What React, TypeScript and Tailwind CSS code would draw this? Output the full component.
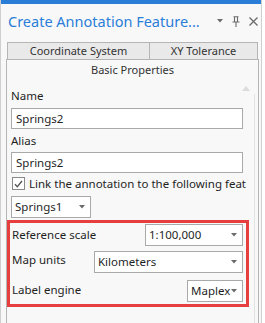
import React from "react";

const font = { fontFamily: '"Noto Sans", "Open Sans", sans-serif' };

const Caret: React.FC = () => (
    <svg width="6" height="4" viewBox="0 0 6 4" className="shrink-0">
        <path d="M0 0h6L3 3.5z" fill="#6b6b6b" />
    </svg>
);

const Select: React.FC<{ value: string; className: string }> = ({ value, className }) => (
    <div
        className={`h-[22px] shrink-0 border border-[#a9a9a9] bg-white flex items-center justify-between pl-[3px] pr-[5px] text-[11.5px] text-[#1f1f1f] ${className}`}
    >
        <span>{value}</span>
        <Caret />
    </div>
);

const Input: React.FC<{ value: string }> = ({ value }) => (
    <div className="h-[21px] w-[232px] border border-[#a9a9a9] bg-white flex items-center pl-[4px] text-[11.5px] text-[#1f1f1f]">
        {value}
    </div>
);

export default function App() {
    return (
        <div className="w-[265px] h-[323px] bg-white overflow-hidden" style={font}>
            <div className="w-[262px] h-full border-l border-r border-[#cfcfcf] bg-[#f8f8f8] flex flex-col">
                <div className="h-[4px] bg-[#2a7ed8]" />
                <div className="h-[34px] flex items-center justify-between pl-[7px] pr-[3px]">
                    <span className="text-[14.5px] text-[#2a7ed8] leading-none">Create Annotation Feature...</span>
                    <div className="flex items-center gap-[9px]">
                        <Caret />
                        <svg width="8" height="11" viewBox="0 0 8 11">
                            <path d="M1.5 0.8h5M2.5 0.8v5M5.5 0.8v5M0.5 6h7M4 6v5" stroke="#6a6a6a" strokeWidth="1.1" fill="none" />
                        </svg>
                        <svg width="9" height="9" viewBox="0 0 9 9">
                            <path d="M0.5 0.5l8 8M8.5 0.5l-8 8" stroke="#6a6a6a" strokeWidth="1.3" />
                        </svg>
                    </div>
                </div>

                <div className="mt-[4px] ml-[6px] mr-[3px] flex h-[17px] text-[11px] text-[#333]">
                    <div className="w-[143px] border border-b-0 border-[#b5b5b5] bg-[#e9e9e9] flex items-center justify-center">
                        Coordinate System
                    </div>
                    <div className="flex-1 border border-l-0 border-b-0 border-[#b5b5b5] bg-[#e9e9e9] flex items-center justify-center">
                        XY Tolerance
                    </div>
                </div>
                <div className="ml-[5px] mr-[2px] h-[21px] border border-b-0 border-[#b5b5b5] bg-[#f8f8f8] flex items-center justify-center text-[11px] text-[#333]">
                    Basic Properties
                </div>

                <div className="ml-[5px] mr-[2px] flex-1 border-l border-r border-[#b5b5b5] relative">
                    <svg width="8" height="5" viewBox="0 0 8 5" className="absolute right-[8px] top-[6px]">
                        <path d="M0 5h8L4 0z" fill="#dcdcdc" />
                    </svg>
                    <div className="absolute right-[3px] top-[14px] bottom-0 w-px bg-[#e2e2e2]" />

                    <div className="pl-[4px] pt-[7px] text-[11.5px] text-[#1f1f1f]">
                        <div className="leading-[17px]">Name</div>
                        <div className="mt-[4px]">
                            <Input value="Springs2" />
                        </div>
                        <div className="mt-[3px] leading-[17px]">Alias</div>
                        <div className="mt-[3px]">
                            <Input value="Springs2" />
                        </div>
                        <div className="mt-[3px] flex items-center gap-[4px] whitespace-nowrap w-[236px] h-[15px]">
                            <div className="ml-px w-[13px] h-[13px] border border-[#8a8a8a] bg-white flex items-center justify-center shrink-0">
                                <svg width="9" height="8" viewBox="0 0 9 8">
                                    <path d="M1 4.2l2.3 2.5L8 1" stroke="#555" strokeWidth="1.3" fill="none" />
                                </svg>
                            </div>
                            <span className="text-[11.5px]">Link the annotation to the following feat</span>
                        </div>
                        <div className="mt-[5px]">
                            <Select value="Springs1" className="w-[80px]" />
                        </div>
                    </div>

                    <div className="mt-[2px] w-[242px] h-[87px] border-[3px] border-[#e6403e] pl-[2px] pr-[3px] pt-px text-[11.5px] text-[#1f1f1f] flex flex-col">
                        <div className="flex items-center justify-between">
                            <span>Reference scale</span>
                            <Select value="1:100,000" className="w-[98px]" />
                        </div>
                        <div className="mt-[5px] flex items-center justify-between">
                            <span className="-mt-[5px]">Map units</span>
                            <Select value="Kilometers" className="w-[149px]" />
                        </div>
                        <div className="mt-[7px] flex items-center justify-between">
                            <span className="-mt-[2px]">Label engine</span>
                            <Select value="Maplex" className="w-[56px]" />
                        </div>
                    </div>
                </div>
            </div>
        </div>
    );
}
